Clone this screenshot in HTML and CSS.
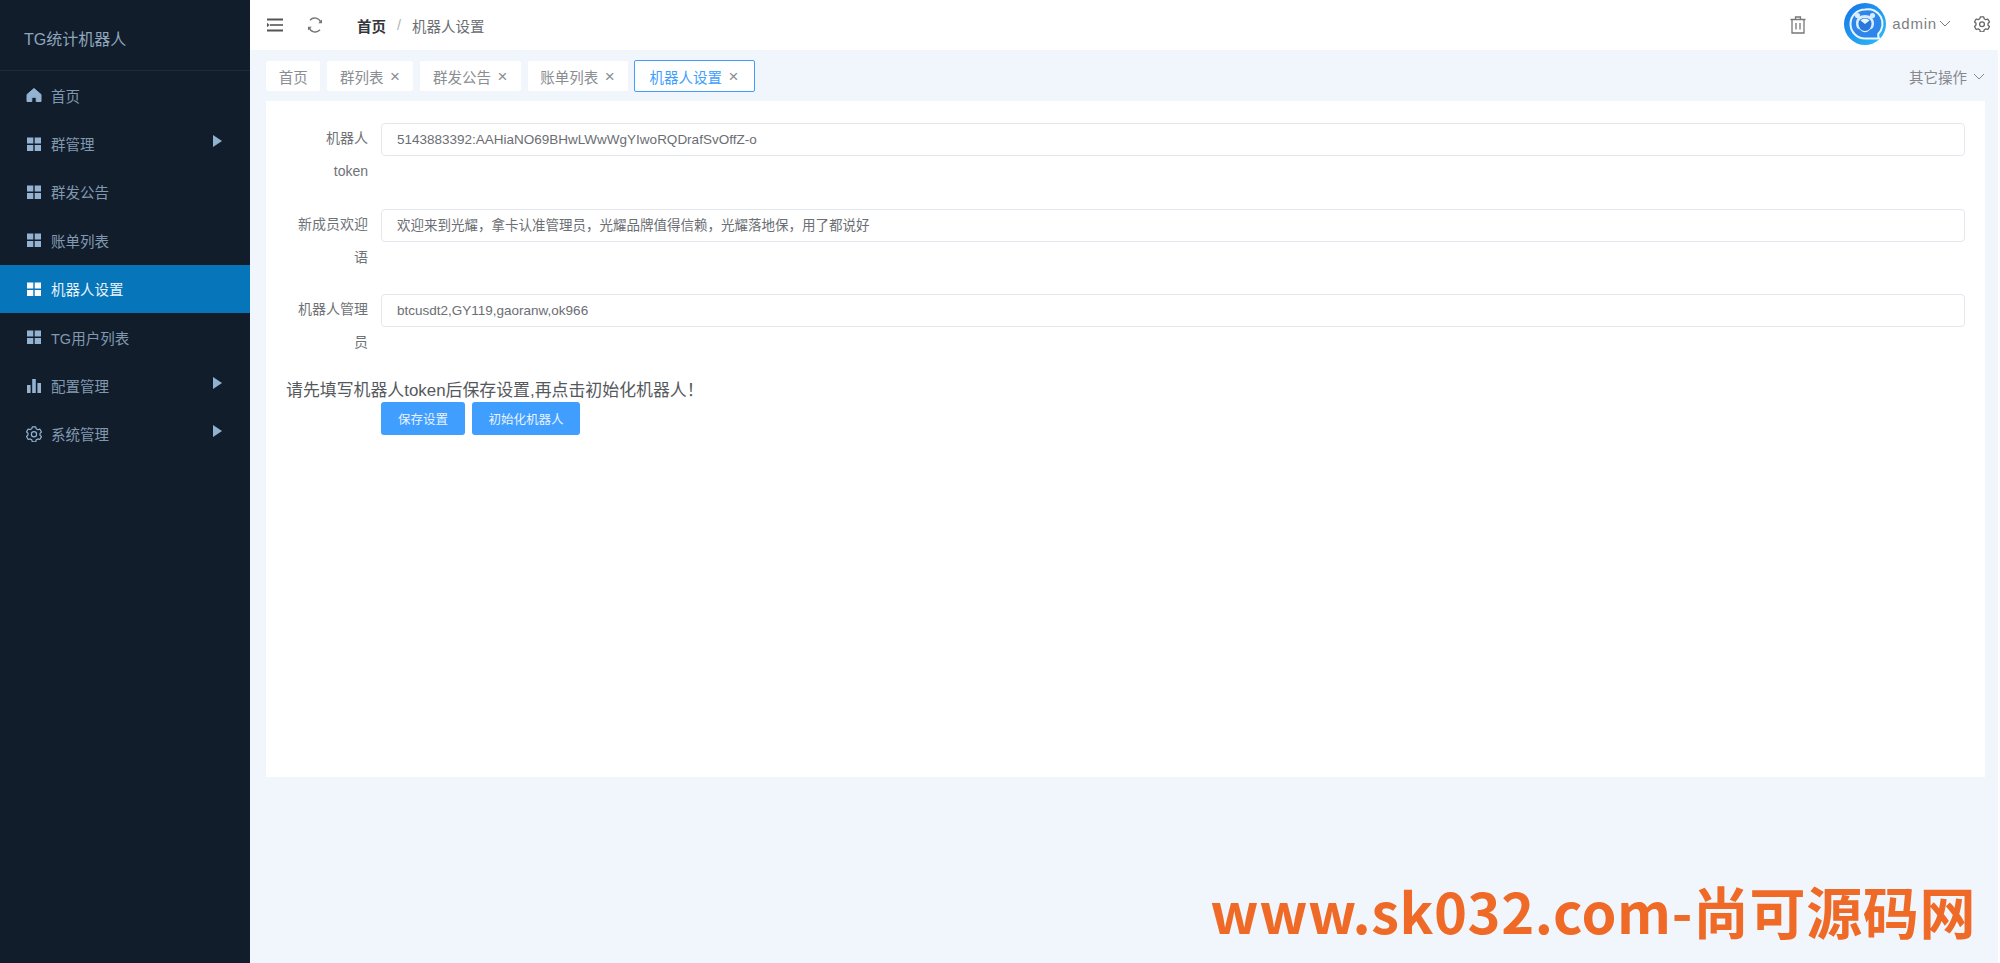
FILE: index.html
```html
<!DOCTYPE html>
<html lang="zh-CN">

<head>
    <meta charset="UTF-8">
    <title>TG统计机器人</title>
    <link rel="stylesheet" href="styles.css">
</head>

<body>
    <aside class="sidebar">
        <div class="logo">TG统计机器人</div>
        <ul class="menu">
            <li class="menu-item">
                <svg class="menu-icon" viewBox="0 0 16 16"><path d="M8 1.500 1 7.500V14.500h4.800v-4.200h4.400v4.200H15V7.500z" fill="currentColor" stroke="currentColor" stroke-linejoin="round"/></svg>
                <span>首页</span>
            </li>
            <li class="menu-item">
                <svg class="menu-icon" viewBox="0 0 16 16"><path d="M1 1.500h6.300v6H1zM8.700 1.500H15v6H8.700zM1 9h6.300v6H1zM8.700 9H15v6H8.700z" fill="currentColor"/></svg>
                <span>群管理</span>
                <i class="menu-arrow"></i>
            </li>
            <li class="menu-item">
                <svg class="menu-icon" viewBox="0 0 16 16"><path d="M1 1.500h6.300v6H1zM8.700 1.500H15v6H8.700zM1 9h6.300v6H1zM8.700 9H15v6H8.700z" fill="currentColor"/></svg>
                <span>群发公告</span>
            </li>
            <li class="menu-item">
                <svg class="menu-icon" viewBox="0 0 16 16"><path d="M1 1.500h6.300v6H1zM8.700 1.500H15v6H8.700zM1 9h6.300v6H1zM8.700 9H15v6H8.700z" fill="currentColor"/></svg>
                <span>账单列表</span>
            </li>
            <li class="menu-item active">
                <svg class="menu-icon" viewBox="0 0 16 16"><path d="M1 1.500h6.300v6H1zM8.700 1.500H15v6H8.700zM1 9h6.300v6H1zM8.700 9H15v6H8.700z" fill="currentColor"/></svg>
                <span>机器人设置</span>
            </li>
            <li class="menu-item">
                <svg class="menu-icon" viewBox="0 0 16 16"><path d="M1 1.500h6.300v6H1zM8.700 1.500H15v6H8.700zM1 9h6.300v6H1zM8.700 9H15v6H8.700z" fill="currentColor"/></svg>
                <span>TG用户列表</span>
            </li>
            <li class="menu-item">
                <svg class="menu-icon" viewBox="0 0 16 16"><path d="M1 7h3.600v8H1zM6.200 1h3.600v14H6.200zM11.400 5H15v10h-3.600z" fill="currentColor"/></svg>
                <span>配置管理</span>
                <i class="menu-arrow"></i>
            </li>
            <li class="menu-item">
                <svg class="menu-icon" viewBox="0 0 16 16"><path d="M6.300.8h3.400l.5 2 1.600.9 2-.6 1.700 2.900-1.500 1.400v1.800l1.500 1.400-1.700 2.900-2-.6-1.600.9-.5 2H6.300l-.5-2-1.600-.9-2 .6L.5 10.500 2 9.100V7.300L.5 5.900l1.700-2.900 2 .6 1.600-.9z" fill="none" stroke="currentColor" stroke-width="1.200" stroke-linejoin="round"/><circle cx="8" cy="8.200" r="2.600" fill="none" stroke="currentColor" stroke-width="1.200"/></svg>
                <span>系统管理</span>
                <i class="menu-arrow"></i>
            </li>
        </ul>
    </aside>

    <div class="main">
        <header class="topbar">
            <svg class="top-icon" viewBox="0 0 16 16"><path d="M0 2.500h16M0 13.500h16" stroke="#555" stroke-width="2.200" fill="none"/><path d="M3 8h13" stroke="#555" stroke-width="1.600" fill="none"/><path d="M0 5.800 2.600 8 0 10.200z" fill="#555"/></svg>
            <svg class="top-icon refresh" viewBox="0 0 16 16"><path d="M13.800 5.500A6.300 6.300 0 0 0 3 3.200M2.200 10.500A6.300 6.300 0 0 0 13 12.800" stroke="#777" stroke-width="1.400" fill="none"/><path d="M15 2.500v3.800h-3.800zM1 13.500V9.700h3.800z" fill="#777"/></svg>
            <div class="crumb">
                <b>首页</b>
                <span class="crumb-sep">/</span>
                <span>机器人设置</span>
            </div>
            <div class="top-right">
                <svg class="trash" viewBox="0 0 16 18"><path d="M.5 3.500h15M5.500 3.500V1h5v2.500M2 3.500V17h12V3.500M6 7v6.500M10 7v6.500" stroke="#777" stroke-width="1.300" fill="none"/></svg>
                <svg class="avatar" viewBox="0 0 42 42">
                    <defs>
                        <linearGradient id="avatarFill" x1="0" y1="0" x2="1" y2="1">
                            <stop offset="0" stop-color="#1671e8"/>
                            <stop offset="1" stop-color="#2cc0f6"/>
                        </linearGradient>
                    </defs>
                    <circle cx="21" cy="21" r="21" fill="url(#avatarFill)"/>
                    <path d="M21 6.500a14.500 14.500 0 1 0 0 29H35a8 8 0 0 1-.800-4.500A14.500 14.500 0 0 0 21 6.500z" fill="#2f86ea" stroke="#e6f6ff" stroke-width="2"/>
                    <circle cx="13.500" cy="12.500" r="2.600" fill="#d6ecff"/>
                    <circle cx="28.500" cy="12.500" r="2.600" fill="#d6ecff"/>
                    <path d="M12 20c0-5 4-8 9-8s9 3 9 8-2 6-4 6.500a6 6 0 0 1-10 0C14 26 12 25 12 20z" fill="#d6ecff"/>
                    <path d="M14.500 20a6.500 5 0 0 1 13 0c0 5-3 8-6.500 8s-6.500-3-6.500-8z" fill="#2a78dc"/>
                    <path d="M16.500 17.500a6 6 0 0 1 9 0L21 21z" fill="#e6f6ff"/>
                </svg>
                <span class="username">admin</span>
                <svg class="chevron" viewBox="0 0 12 7"><path d="M1 1l5 5 5-5" stroke="#777" fill="none"/></svg>
                <svg class="gear" viewBox="0 0 16 16"><path d="M6.300.8h3.400l.5 2 1.600.9 2-.6 1.700 2.900-1.500 1.400v1.800l1.500 1.400-1.700 2.900-2-.6-1.600.9-.5 2H6.300l-.5-2-1.600-.9-2 .6L.5 10.500 2 9.100V7.300L.5 5.900l1.700-2.900 2 .6 1.600-.9z" fill="none" stroke="#666" stroke-width="1.300" stroke-linejoin="round"/><circle cx="8" cy="8.200" r="2.400" fill="none" stroke="#666" stroke-width="1.300"/></svg>
            </div>
        </header>

        <div class="tabs">
            <div class="tab">首页</div>
            <div class="tab">群列表<span class="tab-close">×</span></div>
            <div class="tab">群发公告<span class="tab-close">×</span></div>
            <div class="tab">账单列表<span class="tab-close">×</span></div>
            <div class="tab current">机器人设置<span class="tab-close">×</span></div>
            <div class="tab-more">
                其它操作
                <svg class="chevron" viewBox="0 0 12 7"><path d="M1 1l5 5 5-5" stroke="#888" fill="none"/></svg>
            </div>
        </div>

        <section class="card">
            <div class="form-row">
                <label class="form-label">机器人<br>token</label>
                <input class="form-input" value="5143883392:AAHiaNO69BHwLWwWgYIwoRQDrafSvOffZ-o">
            </div>
            <div class="form-row">
                <label class="form-label">新成员欢迎语</label>
                <input class="form-input form-input-cjk" value="欢迎来到光耀，拿卡认准管理员，光耀品牌值得信赖，光耀落地保，用了都说好">
            </div>
            <div class="form-row">
                <label class="form-label">机器人管理员</label>
                <input class="form-input" value="btcusdt2,GY119,gaoranw,ok966">
            </div>
            <p class="notice">请先填写机器人token后保存设置,再点击初始化机器人！</p>
            <div class="actions">
                <button class="btn btn-save">保存设置</button>
                <button class="btn btn-init">初始化机器人</button>
            </div>
        </section>
    </div>

    <div class="watermark">www.sk032.com-尚可源码网</div>
</body>

</html>
```

FILE: styles.css
```css
* {
    box-sizing: border-box;
}

html,
body {
    height: 100%;
}

body {
    margin: 0;
    display: flex;
    overflow: hidden;
    background: #fff;
    color: #606266;
    font-family: "Liberation Sans", "Noto Sans CJK SC", sans-serif;
    font-size: 14px;
}

/* sidebar */
.sidebar {
    width: 250px;
    flex-shrink: 0;
    background: #121d2c;
    box-shadow: 1px 0 3px rgba(0, 21, 41, 0.35);
}

.logo {
    height: 71px;
    padding: 30px 0 0 24px;
    border-bottom: 1px solid #1c2a3b;
    color: #8ea7bd;
    font-size: 16px;
    line-height: 20px;
}

.menu {
    list-style: none;
    margin: 0;
    padding: 0;
}

.menu-item {
    height: 48.400px;
    display: flex;
    align-items: center;
    padding-left: 26px;
    color: #8199b0;
    font-size: 14.5px;
}

.menu-item.active {
    background: #0675b9;
    color: #e6f3fb;
}

.menu-icon {
    width: 16px;
    height: 16px;
    margin-right: 9px;
    color: #93b3d0;
}

.menu-item.active .menu-icon {
    color: #fff;
}

.menu-arrow {
    margin: -5px 28px 0 auto;
    border-left: 9px solid #8fb2cf;
    border-top: 6px solid transparent;
    border-bottom: 6px solid transparent;
}

/* top bar */
.main {
    flex: 1;
    min-width: 0;
    display: flex;
    flex-direction: column;
    background: #f1f5fc;
    border-right: 2px solid #fff;
}

.topbar {
    height: 50px;
    flex-shrink: 0;
    display: flex;
    align-items: center;
    margin-right: -2px;
    padding: 0 10px 0 17px;
    background: #fff;
}

.top-icon {
    width: 16px;
    height: 16px;
    margin-right: 24px;
}

.refresh {
    margin-right: 34px;
}

.crumb {
    display: flex;
    align-items: center;
    gap: 11px;
    color: #6b6e73;
    font-size: 14.500px;
}

.crumb b {
    color: #33363a;
}

.crumb-sep {
    color: #b0b3b8;
}

.top-right {
    margin-left: auto;
    margin-bottom: 3px;
    display: flex;
    align-items: center;
}

.trash {
    width: 16px;
    height: 18px;
    margin: 3px 38px 0 0;
}

.avatar {
    width: 42px;
    height: 42px;
    margin: 1px 6px 0 0;
}

.username {
    color: #7c7f84;
    font-size: 15px;
    letter-spacing: 0.8px;
}

.chevron {
    width: 12px;
    height: 7px;
    margin-left: 2px;
}

.gear {
    width: 16px;
    height: 16px;
    margin-left: 23px;
}

/* tabs */
.tabs {
    height: 51px;
    flex-shrink: 0;
    display: flex;
    align-items: center;
    gap: 7px;
    padding: 1px 13px 0 16px;
}

.tab {
    height: 30px;
    display: flex;
    align-items: center;
    padding: 0 12.700px;
    background: #fff;
    border-radius: 2px;
    color: #8a8d92;
    font-size: 14.500px;
}

.tab.current {
    height: 32px;
    margin-left: -1px;
    padding: 0 14.500px;
    border: 1px solid #409eff;
    color: #409eff;
}

.tab-close {
    width: 11px;
    margin-left: 6px;
    color: #8a8d92;
    font-size: 17px;
    line-height: 1;
    text-align: center;
}

.tab-more {
    margin-left: auto;
    display: flex;
    align-items: center;
    gap: 4px;
    color: #85888d;
    font-size: 14.500px;
}

/* form card */
.card {
    width: 1719px;
    height: 676px;
    margin-left: 16px;
    padding: 22px 20px 0;
    background: #fff;
}

.form-row {
    display: flex;
    align-items: flex-start;
    height: 85.500px;
}

.form-label {
    width: 82px;
    margin: -1px 13px 0 0;
    text-align: right;
    color: #6f7277;
    font-size: 14px;
    line-height: 33px;
}

.form-input {
    width: 1584px;
    height: 33px;
    padding: 0 12px 0 15px;
    border: 1px solid #e4e7ed;
    border-radius: 4px;
    color: #6b6e73;
    font-family: inherit;
    font-size: 13.500px;
    outline: none;
}

.form-input-cjk {
    padding-bottom: 3px;
}

.notice {
    margin: 1px 0 0;
    color: #55585c;
    font-size: 16.900px;
    line-height: 20px;
}

.actions {
    display: flex;
    gap: 7px;
    margin: 1px 0 0 95px;
}

.btn {
    height: 33px;
    padding: 0;
    border: none;
    border-radius: 3px;
    background: #409eff;
    color: #e9f3ff;
    font-family: inherit;
    font-size: 12.500px;
}

.btn-save {
    width: 84px;
}

.btn-init {
    width: 108px;
}

/* site watermark, sits over the page */
.watermark {
    position: absolute;
    right: 24px;
    bottom: 20px;
    color: #ee6a26;
    font-family: "Noto Sans CJK SC", sans-serif;
    font-size: 56px;
    font-weight: 700;
    letter-spacing: 0.6px;
    line-height: 66px;
    white-space: nowrap;
}
```
